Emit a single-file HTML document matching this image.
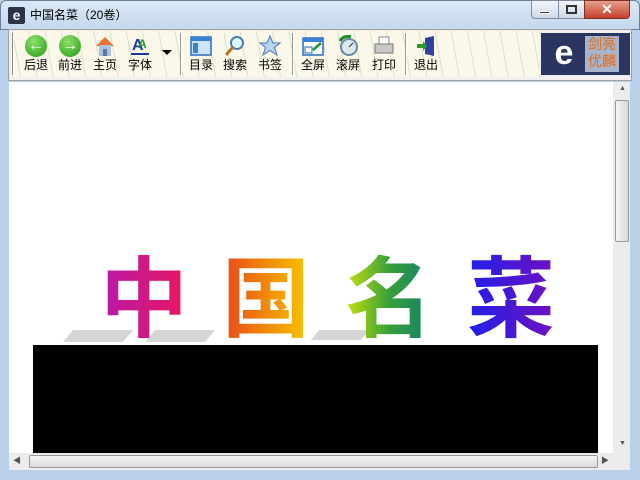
<!DOCTYPE html><html><head><meta charset="utf-8"><style>
*{margin:0;padding:0;box-sizing:border-box}
body{width:640px;height:480px;overflow:hidden;background:#b9d1ea;font-family:"Liberation Sans","Noto Sans CJK SC",sans-serif;position:relative}
.a{position:absolute}
.title{left:0;top:0;width:640px;height:30px;background:linear-gradient(#dbe8f6,#c4d8ee);border-radius:6px 6px 0 0;border:1px solid #6b7f99}
.lbl{font-size:12px;color:#000;position:absolute;top:58px;width:34px;text-align:center;line-height:14px}
.ico{position:absolute;top:35px;width:22px;height:22px}
.big{position:absolute;top:243px;font-size:88px;font-weight:bold;line-height:100px;font-family:"Noto Sans CJK SC",sans-serif;-webkit-background-clip:text;background-clip:text;color:transparent}
</style></head><body>
<div class="a title"></div>
<div class="a" style="left:8px;top:7px;width:17px;height:17px;background:#2b3448;border-radius:2px;color:#fff;font-weight:bold;font-size:14px;line-height:16px;text-align:center">e</div>
<div class="a" style="left:30px;top:7px;font-size:12px;line-height:16px">中国名菜（20卷）</div>
<div class="a" style="left:531px;top:0;width:28px;height:19px;background:linear-gradient(#f2f6fb,#cdd9e8);border:1px solid #7b8ba0;border-radius:0 0 0 4px"></div>
<div class="a" style="left:539px;top:11px;width:11px;height:3px;background:#333;border:1px solid #fff"></div>
<div class="a" style="left:558px;top:0;width:27px;height:19px;background:linear-gradient(#f2f6fb,#cdd9e8);border:1px solid #7b8ba0"></div>
<div class="a" style="left:566px;top:5px;width:11px;height:9px;border:2px solid #333"></div>
<div class="a" style="left:584px;top:0;width:46px;height:19px;background:linear-gradient(#e8a08f,#c3402a);border:1px solid #7b3325;border-radius:0 0 4px 0;color:#fff;font-weight:bold;text-align:center;font-size:14px;line-height:17px">✕</div>
<div class="a" style="left:8px;top:29px;width:624px;height:52px;background:#f0f0f0;border:1px solid #a0a0a0"></div>
<div class="a" style="left:11px;top:31px;width:528px;height:46px;background:#fbf8ea;background-image:repeating-linear-gradient(80deg,transparent 0 9px,#d5e4cc 9px 10px,transparent 10px 16px)"></div>
<div class="a" style="left:12px;top:33px;width:2px;height:42px;border-left:1px solid #888;border-right:1px solid #fff"></div>
<div class="a" style="left:180px;top:33px;width:2px;height:42px;border-left:1px solid #999;border-right:1px solid #fff"></div>
<div class="a" style="left:292px;top:33px;width:2px;height:42px;border-left:1px solid #999;border-right:1px solid #fff"></div>
<div class="a" style="left:405px;top:33px;width:2px;height:42px;border-left:1px solid #999;border-right:1px solid #fff"></div>
<div class="ico" style="left:25px;border-radius:50%;background:radial-gradient(circle at 40% 30%,#8fe06a,#1f9a12);color:#fff;text-align:center;font-weight:bold;font-size:16px;line-height:22px">←</div>
<div class="ico" style="left:59px;border-radius:50%;background:radial-gradient(circle at 40% 30%,#8fe06a,#1f9a12);color:#fff;text-align:center;font-weight:bold;font-size:16px;line-height:22px">→</div>
<svg class="ico" style="left:94px" viewBox="0 0 22 22"><path d="M2 11 L11 2 L20 11 Z" fill="#f07030"/><rect x="5" y="10" width="12" height="11" fill="#a8c4e0"/><rect x="9" y="14" width="4" height="7" fill="#5a7aa0"/></svg>
<svg class="ico" style="left:129px" viewBox="0 0 22 22"><text x="3" y="15" font-size="16" font-weight="bold" fill="#1a3aa0">A</text><text x="9" y="13" font-size="12" font-weight="bold" fill="#2a9a2a">A</text><rect x="2" y="18" width="18" height="2" fill="#1a3aa0"/></svg>
<div class="a" style="left:162px;top:50px;width:0;height:0;border-left:5px solid transparent;border-right:5px solid transparent;border-top:5px solid #000"></div>
<svg class="ico" style="left:190px" viewBox="0 0 22 22"><rect x="1" y="2" width="20" height="18" fill="#cfe4f8" stroke="#2a6ac0" stroke-width="1.5"/><rect x="1" y="2" width="20" height="4" fill="#3a80d8"/><rect x="3" y="8" width="5" height="10" fill="#3a80d8"/></svg>
<svg class="ico" style="left:224px" viewBox="0 0 22 22"><circle cx="13" cy="8" r="6" fill="#dff" stroke="#4a7ab0" stroke-width="2"/><path d="M9 12 L2 20" stroke="#c07020" stroke-width="3"/></svg>
<svg class="ico" style="left:259px" viewBox="0 0 22 22"><path d="M11 1 L14 8 L21 8 L15.5 12.5 L18 20 L11 15.5 L4 20 L6.5 12.5 L1 8 L8 8 Z" fill="#b8d4f0" stroke="#4a78b0"/></svg>
<svg class="ico" style="left:302px" viewBox="0 0 22 22"><rect x="1" y="3" width="20" height="17" fill="#fff" stroke="#2a6ac0" stroke-width="1.5"/><rect x="1" y="3" width="20" height="4" fill="#3a80d8"/><rect x="3" y="12" width="7" height="6" fill="none" stroke="#2a6ac0"/><path d="M11 15 L19 8" stroke="#1a9a30" stroke-width="2.5"/></svg>
<svg class="ico" style="left:337px" viewBox="0 0 22 22"><circle cx="12" cy="12" r="8" fill="#dde8ee" stroke="#6a8aa0" stroke-width="2"/><path d="M3 6 A9 9 0 0 1 14 2" stroke="#1a8a2a" stroke-width="3" fill="none"/><path d="M12 12 L16 8" stroke="#333"/></svg>
<svg class="ico" style="left:373px" viewBox="0 0 22 22"><rect x="6" y="2" width="10" height="8" fill="#fff" stroke="#888"/><rect x="2" y="9" width="18" height="9" fill="#c8c8c8" stroke="#777"/></svg>
<svg class="ico" style="left:415px" viewBox="0 0 22 22"><path d="M10 3 L19 1 L19 21 L10 19 Z" fill="#3040a0"/><path d="M2 9 L8 9 L8 6 L12 11 L8 16 L8 13 L2 13 Z" fill="#2a9a2a"/></svg>
<div class="lbl" style="left:19px">后退</div><div class="lbl" style="left:53px">前进</div><div class="lbl" style="left:88px">主页</div><div class="lbl" style="left:123px">字体</div>
<div class="lbl" style="left:184px">目录</div><div class="lbl" style="left:218px">搜索</div><div class="lbl" style="left:253px">书签</div>
<div class="lbl" style="left:296px">全屏</div><div class="lbl" style="left:331px">滚屏</div><div class="lbl" style="left:367px">打印</div><div class="lbl" style="left:409px">退出</div>
<div class="a" style="left:541px;top:33px;width:89px;height:42px;background:#2a3560"></div>
<div class="a" style="left:549px;top:36px;width:30px;height:36px;color:#fff;font-weight:bold;font-size:34px;line-height:34px;text-align:center;font-family:'Liberation Sans',sans-serif">e</div>
<div class="a" style="left:585px;top:36px;width:34px;height:36px;background:#a8b4cc;color:#e86a10;font-size:14px;line-height:17px;text-align:center">剑亮<br>优麟</div>
<div class="a" style="left:9px;top:82px;width:621px;height:388px;background:#fff"></div>
<div class="a" style="left:613px;top:82px;width:17px;height:371px;background:#ececec"></div>
<div class="a" style="left:615px;top:100px;width:14px;height:142px;background:linear-gradient(90deg,#f5f5f5,#d9d9d9);border:1px solid #999;border-radius:2px"></div>
<div class="a" style="left:619px;top:85px;font-size:7px;color:#555">▲</div>
<div class="a" style="left:619px;top:440px;font-size:7px;color:#555">▼</div>
<div class="a" style="left:9px;top:453px;width:604px;height:17px;background:#ececec"></div>
<div class="a" style="left:29px;top:455px;width:569px;height:13px;background:linear-gradient(#f5f5f5,#d9d9d9);border:1px solid #999;border-radius:2px"></div>
<div class="a" style="left:13px;top:455px;font-size:8px;color:#555">◀</div>
<div class="a" style="left:601px;top:455px;font-size:8px;color:#555">▶</div>
<div class="a" style="left:613px;top:453px;width:17px;height:17px;background:#ececec"></div>
<div class="a" style="left:68px;top:330px;width:60px;height:12px;background:#ccc;transform:skewX(-40deg);opacity:.8"></div>
<div class="a" style="left:150px;top:330px;width:60px;height:12px;background:#ccc;transform:skewX(-40deg);opacity:.8"></div>
<div class="a" style="left:315px;top:330px;width:50px;height:10px;background:#ccc;transform:skewX(-40deg);opacity:.8"></div>
<div class="big" style="left:100px;background-image:linear-gradient(90deg,#b818a8,#e81860)">中</div>
<div class="big" style="left:222px;background-image:linear-gradient(90deg,#e84818,#f8c800)">国</div>
<div class="big" style="left:345px;background-image:linear-gradient(90deg,#c8e010,#38a038,#108070)">名</div>
<div class="big" style="left:467px;background-image:linear-gradient(90deg,#2020e8,#7010c0)">菜</div>
<div class="a" style="left:33px;top:345px;width:565px;height:108px;background:#000"></div>
</body></html>
